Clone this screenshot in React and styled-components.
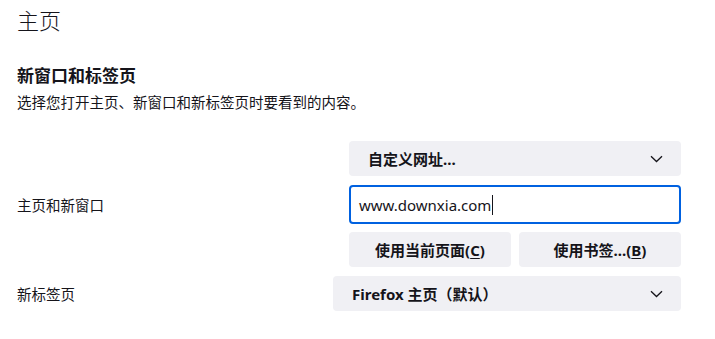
import React from "react";
import styled, { createGlobalStyle } from "styled-components";

const GlobalStyle = createGlobalStyle`
  html, body {
    margin: 0;
    padding: 0;
    background: #ffffff;
  }
  body {
    font-family: "Noto Sans", "Noto Sans CJK SC", sans-serif;
    color: #15141a;
  }
`;

const Page = styled.div`
  width: 715px;
  height: 339px;
  box-sizing: border-box;
  padding: 4px 34px 0 17px;
  overflow: hidden;
`;

const Title = styled.h1`
  margin: 0;
  font-size: 22px;
  font-weight: 300;
  line-height: 30px;
  font-family: "Noto Sans CJK SC", sans-serif;
`;

const Heading = styled.h2`
  margin: 30px 0 0;
  font-size: 17px;
  font-weight: 700;
  line-height: 22px;
  font-family: "Noto Sans CJK SC", sans-serif;
`;

const Desc = styled.p`
  margin: 5px 0 0;
  font-size: 14.5px;
  line-height: 22px;
  font-family: "Noto Sans CJK SC", sans-serif;
`;

const Grid = styled.div`
  margin-top: 28px;
  display: grid;
  grid-template-columns: 1fr 348px;
  row-gap: 9px;
  align-items: center;
`;

const Label = styled.div`
  font-size: 14.5px;
  font-family: "Noto Sans CJK SC", sans-serif;
`;

const Stack = styled.div`
  display: flex;
  flex-direction: column;
  gap: 8px;
  padding-left: ${(p) => p.$indent || 0}px;
`;

const Select = styled.div`
  height: 35px;
  box-sizing: border-box;
  border-radius: 4px;
  background: #f0f0f4;
  display: flex;
  align-items: center;
  justify-content: space-between;
  padding: 0 18px 0 19px;
  font-size: 15px;
  font-weight: 700;
  font-family: "Noto Sans", "Noto Sans CJK SC", sans-serif;
`;

const Input = styled.div`
  height: 39px;
  box-sizing: border-box;
  margin-top: 1px;
  border: 2px solid #0061e0;
  border-radius: 4px;
  display: flex;
  align-items: center;
  padding-left: 8px;
  font-size: 15px;
  font-family: "Noto Sans", sans-serif;
`;

const Caret = styled.span`
  display: inline-block;
  width: 1px;
  height: 20px;
  margin-left: 1px;
  background: #15141a;
`;

const ButtonRow = styled.div`
  display: grid;
  grid-template-columns: 1fr 1fr;
  gap: 8px;
`;

const Button = styled.div`
  height: 35px;
  border-radius: 4px;
  background: #f0f0f4;
  display: flex;
  align-items: center;
  justify-content: center;
  font-size: 15px;
  font-weight: 700;
  font-family: "Noto Sans", "Noto Sans CJK SC", sans-serif;
  u {
    text-underline-offset: 2px;
  }
`;

const Chevron = () => (
  <svg width="13" height="8" viewBox="0 0 13 8" fill="none">
    <path d="M1 1.2 L6.5 6.5 L12 1.2" stroke="#15141a" strokeWidth="1.3" />
  </svg>
);

export default function App() {
  return (
    <Page>
      <GlobalStyle />
      <Title>主页</Title>
      <Heading>新窗口和标签页</Heading>
      <Desc>选择您打开主页、新窗口和新标签页时要看到的内容。</Desc>
      <Grid>
        <Label>主页和新窗口</Label>
        <Stack $indent={16}>
          <Select>
            <span>自定义网址...</span>
            <Chevron />
          </Select>
          <Input>
            www.downxia.com
            <Caret />
          </Input>
          <ButtonRow>
            <Button>
              使用当前页面(<u>C</u>)
            </Button>
            <Button>
              使用书签...(<u>B</u>)
            </Button>
          </ButtonRow>
        </Stack>
        <Label>新标签页</Label>
        <Select>
          <span>Firefox 主页（默认）</span>
          <Chevron />
        </Select>
      </Grid>
    </Page>
  );
}
